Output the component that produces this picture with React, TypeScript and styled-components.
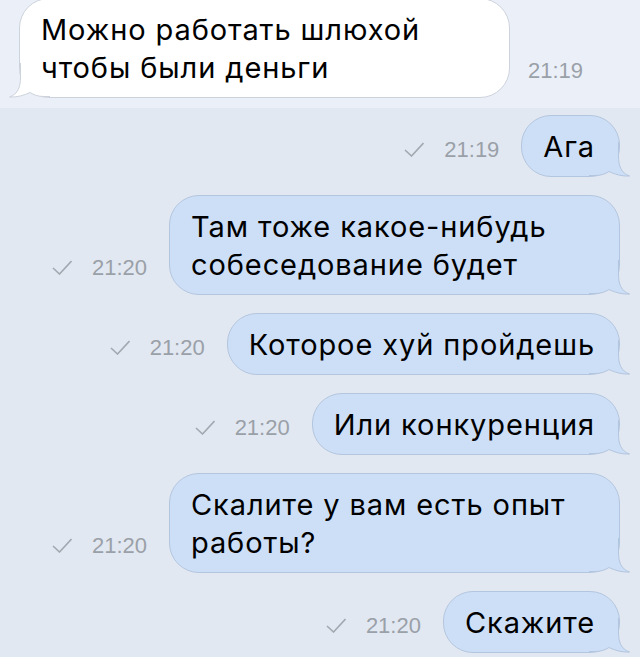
import React from 'react';
import styled, {createGlobalStyle} from 'styled-components';

const GlobalStyle = createGlobalStyle`
  html, body {
    margin: 0;
    padding: 0;
    background: #e2e8f1;
  }
  body {
    font-family: "Liberation Sans", Arial, sans-serif;
    -webkit-font-smoothing: antialiased;
  }
`;

const Screen = styled.div`
  width: 640px;
  height: 657px;
  overflow: hidden;
  background: #e2e8f1;
`;

const UnreadRow = styled.div`
  display: flex;
  align-items: last baseline;
  padding: 0 0 10px 19px;
  background: #ebf0f8;
`;

const List = styled.div`
  display: flex;
  flex-direction: column;
  gap: 18px;
  padding: 7px 20px 0 0;
`;

const Row = styled.div`
  display: flex;
  justify-content: flex-end;
  align-items: last baseline;
`;

const Bubble = styled.div<{ $out?: boolean }>`
  position: relative;
  box-sizing: border-box;
  max-width: ${p => p.$out ? 451 : 491}px;
  width: ${p => p.$out ? 'auto' : '491px'};
  margin-top: ${p => p.$out ? 0 : -2}px;
  padding: 12px 24px 10px 21px;
  border: 1px solid ${p => p.$out ? '#b3c6df' : '#cdd3dc'};
  border-radius: 30px;
  background: ${p => p.$out ? '#cddff7' : '#ffffff'};
  color: #000;
  font-family: Inter, "Liberation Sans", sans-serif;
  font-size: 29px;
  line-height: 38px;
  letter-spacing: 0.9px;
`;

const Text = styled.span`
  position: relative;
  z-index: 1;
`;

const Tail = styled.svg<{ $out?: boolean }>`
  position: absolute;
  bottom: -2px;
  width: 44px;
  height: 36px;
  ${p => p.$out ? 'right: -14px;' : 'left: -14px; transform: scaleX(-1);'}
`;

const Meta = styled.div<{ $out?: boolean }>`
  display: flex;
  align-items: baseline;
  gap: 20px;
  margin: ${p => p.$out ? '0 22px 0 0' : '0 0 0 18px'};
  color: #9aa0a8;
  font-size: 22px;
  line-height: 24px;
`;

const Check = styled.svg`
  width: 20px;
  height: 15px;
`;

function BubbleTail({out}: { out?: boolean }) {
    const fill = out ? '#cddff7' : '#ffffff';
    const stroke = out ? '#b3c6df' : '#cdd3dc';
    const edge = 'M29.5,0 V14 C29.5,24 32,31 40.5,34 C33,34.5 25,32 20,29.5 C16,32 12,33.5 6,33.5 H0';
    return (
        <Tail $out={out} viewBox="0 0 44 36">
            <path d={edge + ' V0 Z'} fill={fill}/>
            <path d={edge} fill="none" stroke={stroke} strokeWidth="1"/>
        </Tail>
    );
}

function Message({text, time, out}: { text: string; time: string; out?: boolean }) {
    const bubble = (
        <Bubble $out={out}>
            <BubbleTail out={out}/>
            <Text>{text}</Text>
        </Bubble>
    );
    const meta = (
        <Meta $out={out}>
            {out && <Check viewBox="0 0 20 15">
                <path d="M1,8 L7.5,14 L19.5,1" fill="none" stroke="#a2a8b0" strokeWidth="1.6"/>
            </Check>}
            <span>{time}</span>
        </Meta>
    );
    return out ? <Row>{meta}{bubble}</Row> : <>{bubble}{meta}</>;
}

const messages = [
    {text: 'Ага', time: '21:19'},
    {text: 'Там тоже какое-нибудь собеседование будет', time: '21:20'},
    {text: 'Которое хуй пройдешь', time: '21:20'},
    {text: 'Или конкуренция', time: '21:20'},
    {text: 'Скалите у вам есть опыт работы?', time: '21:20'},
    {text: 'Скажите', time: '21:20'},
];

export default function App() {
    return (
        <Screen>
            <GlobalStyle/>
            <UnreadRow>
                <Message text="Можно работать шлюхой чтобы были деньги" time="21:19"/>
            </UnreadRow>
            <List>
                {messages.map((m, i) => <Message key={i} text={m.text} time={m.time} out/>)}
            </List>
        </Screen>
    );
}
